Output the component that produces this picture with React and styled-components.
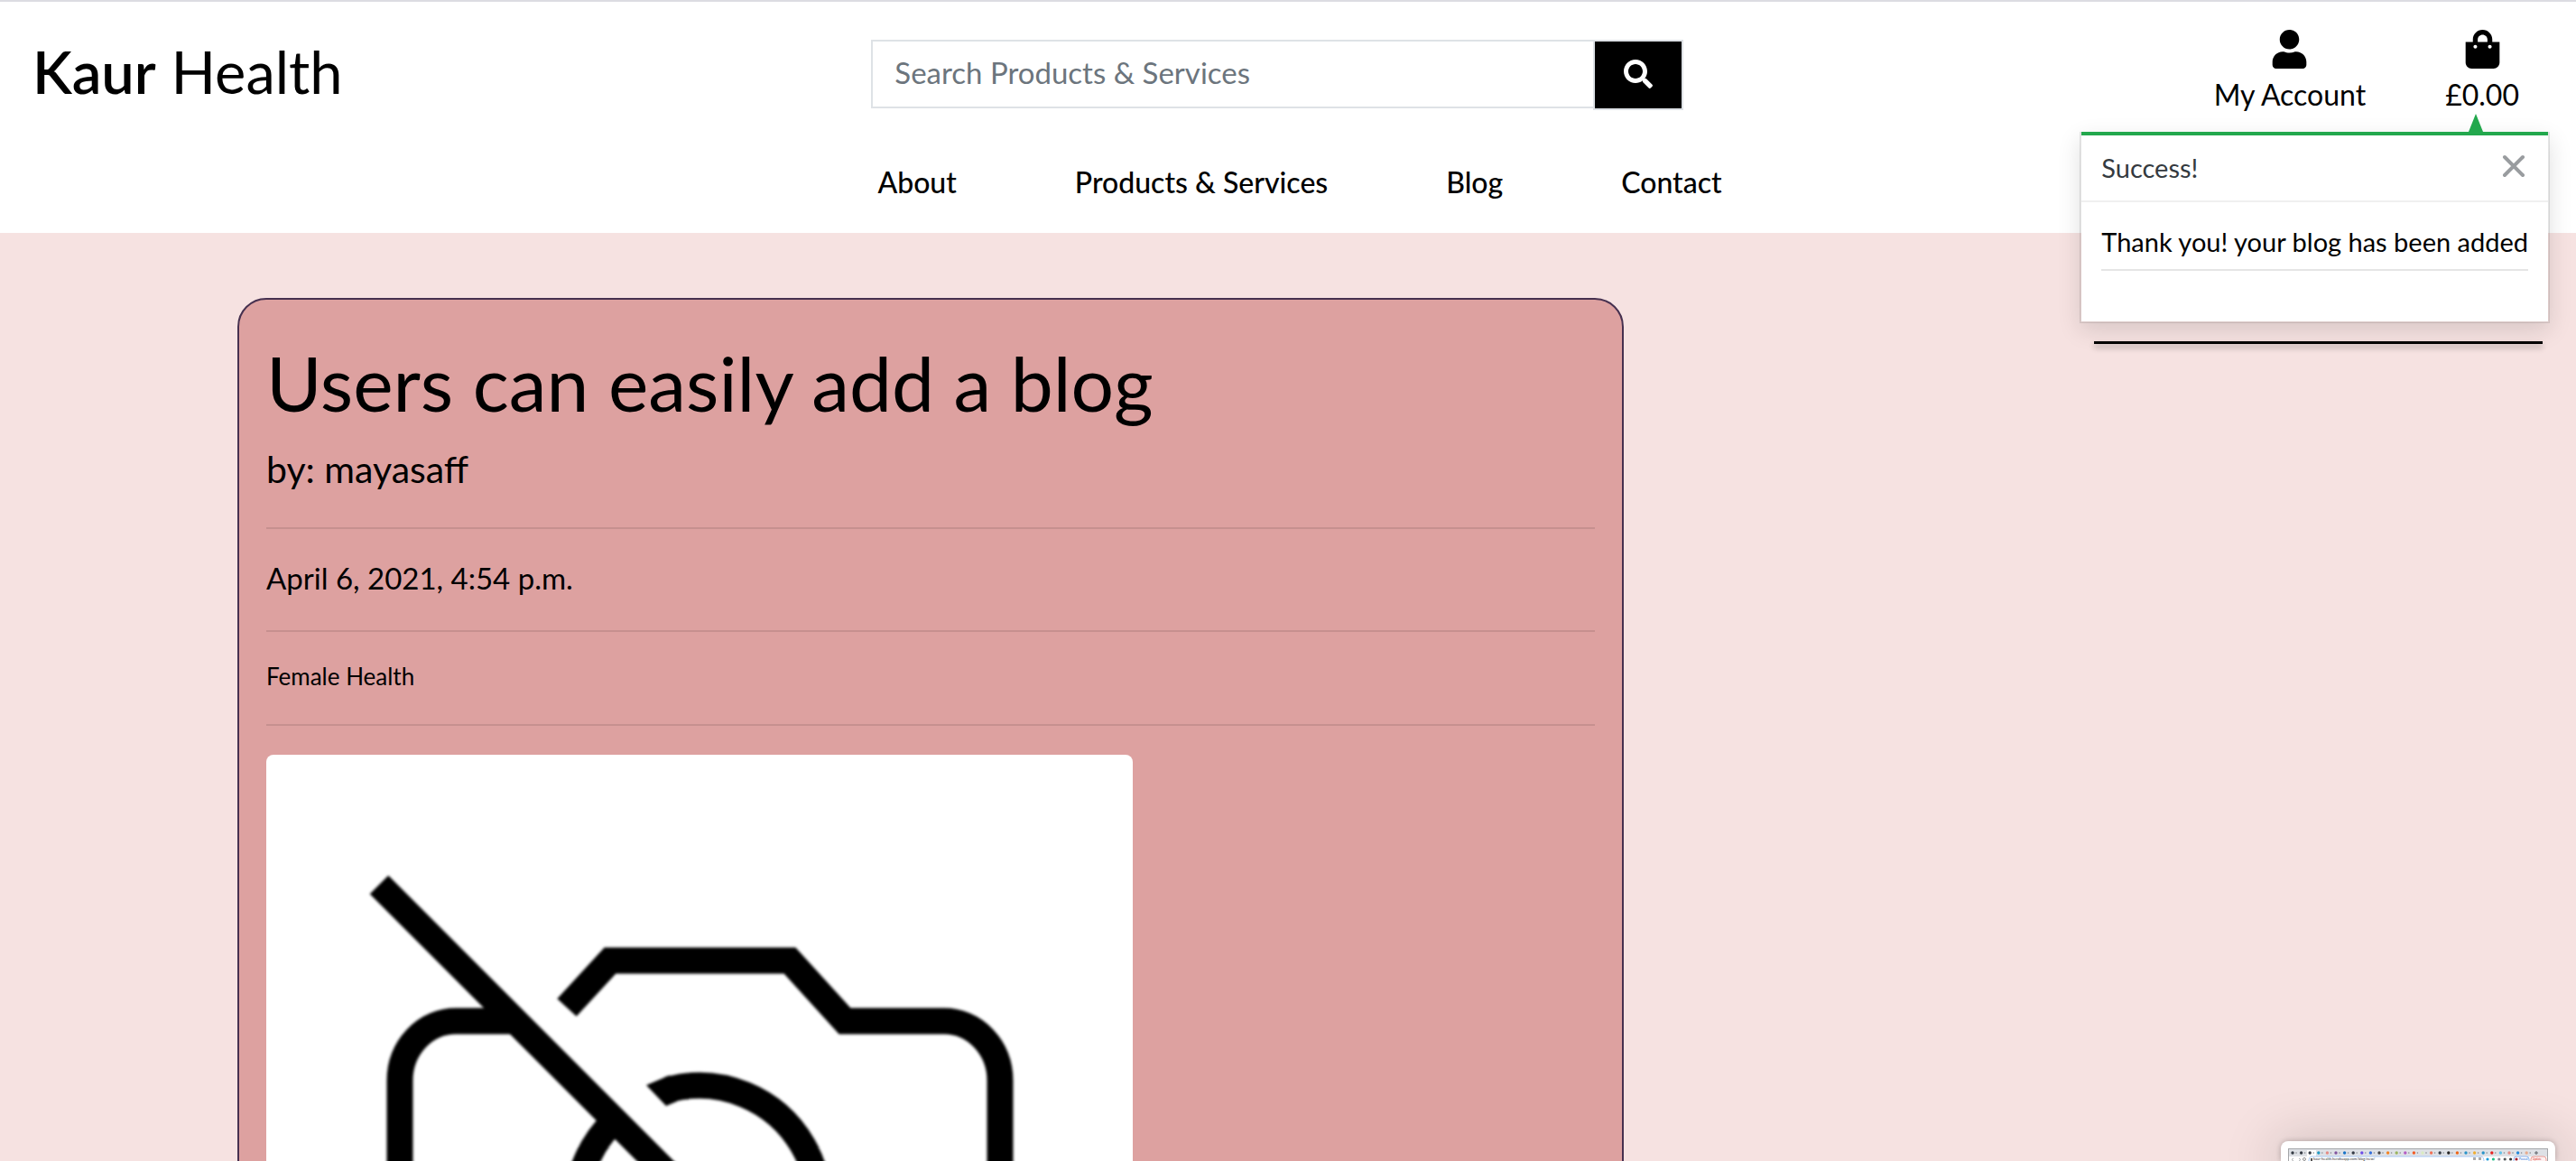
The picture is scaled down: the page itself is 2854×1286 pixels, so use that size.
import React, { useState } from 'react';
import styled, { createGlobalStyle } from 'styled-components';
import { FaUser, FaShoppingBag, FaSearch } from 'react-icons/fa';

const GlobalStyle = createGlobalStyle`
  *, *::before, *::after { box-sizing: border-box; }
  body {
    margin: 0;
    font-family: Lato, "Open Sans", sans-serif;
    font-size: 32px;
    color: #000;
    background: #f6e2e1;
  }
  h1, h2, p { margin: 0; font-weight: 400; }
  a { color: inherit; text-decoration: none; }
`;

const Page = styled.div`
  display: flex;
  flex-direction: column;
  height: 100vh;
  overflow: hidden;
`;

const Header = styled.header`
  position: relative;
  z-index: 2;
  flex: none;
  padding-bottom: 36px;
  border-top: 2px solid #dcdce2;
  background: #fff;
`;

const TopRow = styled.div`
  display: grid;
  grid-template-columns: repeat(3, 1fr);
  align-items: start;
`;

const Logo = styled.a`
  padding: 38px 0 0 36px;
  font-size: 65px;
  line-height: 78px;

  strong { font-weight: 600; }
`;

const SearchForm = styled.form`
  display: flex;
  align-items: flex-start;
  padding: 42px 38px 0 14px;
`;

const SearchInput = styled.input`
  flex: 1;
  min-width: 0;
  height: 76px;
  padding: 0 24px 4px;
  border: 2px solid #dee2e6;
  border-right: 0;
  border-radius: 0;
  outline: 0;
  background: #fff;
  color: #000;
  font: inherit;
  font-size: 33px;

  &::placeholder { color: #6c757d; opacity: 1; }
`;

const SearchButton = styled.button`
  display: flex;
  align-items: center;
  justify-content: center;
  width: 100px;
  height: 78px;
  padding: 0 0 2px;
  border: 2px solid #dee2e6;
  background: #000;
  color: #fff;
  font-size: 32px;
`;

const AccountLinks = styled.div`
  display: flex;
  justify-content: flex-end;
  gap: 88px;
  padding: 31px 63px 0 0;
`;

const AccountLink = styled.a`
  display: flex;
  flex-direction: column;
  align-items: center;
  gap: 9px;
  line-height: 40px;

  svg { width: 43px; height: 43px; }
`;

const Nav = styled.nav`
  display: flex;
  justify-content: center;
  gap: 131px;
  padding: 57px 0 0 26px;
  font-weight: 500;
  line-height: 40px;
`;

const ToastWrap = styled.div`
  position: absolute;
  top: 144px;
  right: 29px;
`;

const Toast = styled.section`
  position: relative;
  border: 2px solid rgba(0, 0, 0, 0.1);
  border-top: 0;
  background: #fff;
  background-clip: padding-box;
  box-shadow: 0 8px 24px rgba(0, 0, 0, 0.12);
  font-size: 29px;
  line-height: 36px;
`;

const ToastArrow = styled.span`
  position: absolute;
  right: 72px;
  bottom: 100%;
  border: 8px solid transparent;
  border-top: 0;
  border-bottom: 20px solid #23a84d;
`;

const ToastHeader = styled.header`
  display: flex;
  align-items: center;
  justify-content: space-between;
  height: 78px;
  padding: 0 24px 0 22px;
  border-top: 4px solid #23a84d;
  border-bottom: 2px solid #f0f0f0;
  color: #343a40;
`;

const CloseButton = styled.button`
  display: flex;
  padding: 0 0 4px;
  border: 0;
  background: none;
  color: #999c9f;
`;

const ToastBody = styled.div`
  padding: 24px 22px 56px;

  p {
    padding: 2px 0 12px;
    border-bottom: 2px solid #e5e5e5;
    white-space: nowrap;
  }
`;

const ToastShadowLine = styled.div`
  height: 3px;
  margin: 20px 8px 0 16px;
  background: #000;
  box-shadow: 0 4px 6px rgba(0, 0, 0, 0.3);
`;

const Main = styled.main`
  flex: 1;
  min-height: 0;
  overflow-y: auto;
  scrollbar-width: none;
  padding: 72px 263px;
`;

const Card = styled.article`
  width: 66%;
  padding: 42px 30px;
  border: 2px solid #46304f;
  border-radius: 32px;
  background: #dda1a0;
`;

const Title = styled.h1`
  font-size: 84px;
  line-height: 100px;
`;

const Author = styled.h2`
  padding: 22px 0 8px;
  font-size: 41px;
  line-height: 48px;
`;

const Rule = styled.hr`
  height: 2px;
  margin: 32px 0;
  border: 0;
  background: rgba(0, 0, 0, 0.1);
`;

const Published = styled.p`
  padding-bottom: 4px;
  font-size: 33px;
  line-height: 44px;
`;

const Category = styled.p`
  padding-bottom: 4px;
  font-size: 26px;
  line-height: 34px;
`;

const PostImage = styled.div`
  width: 960px;
  max-width: 100%;
  border-radius: 8px;
  overflow: hidden;
  background: #fff;

  svg { display: block; width: 100%; filter: blur(1.5px); }
`;

const Preview = styled.aside`
  position: fixed;
  right: 23px;
  bottom: 0;
  z-index: 3;
  width: 304px;
  height: 22px;
  border-radius: 8px 8px 0 0;
  background: #fff;
  box-shadow: 0 0 6px rgba(0, 0, 0, 0.25), 0 8px 60px 8px rgba(0, 0, 0, 0.2);

  svg { display: block; }
`;

const NoImage = () => (
  <svg viewBox="0 0 960 960" role="img" aria-label="No image available" fill="none" stroke="#000" strokeWidth="29">
    <path d="M125 144L790 809" />
    <path d="M333 280L381 228H580L641 295H751A62 66 0 0 1 813 361V735" />
    <path d="M280 295H210A62 66 0 0 0 148 361V700A62 66 0 0 0 210 766H720" />
    <path d="M445 371A133 133 0 0 1 574 593" />
    <path d="M421 366L443 389L455 384L447 355Z" fill="#000" stroke="none" />
    <path d="M386 405A133 133 0 1 0 574 593" />
  </svg>
);

const tabs = [
  '#333a44', '#333a44', '#333a44', '#1e9ac4', '#e58b84', '#80539f', '#1673c8', '#333a44', '#6b4be8',
  '#336fdc', '#444', '#f58220', '#9ab55e', '#b45ac4', '#f35a24', '#d9ecc0', '#f27055', '#333a44',
  '#222', '#ef6414', '#2793c9', '#efae32', '#2793c9', '#e8221f', '#62c3ea', '#e58b84', '#2388dc', '#e8ab8c',
];
const extensions = ['#1b9cd8', '#1fbd87', '#8a8796', '#55585c', '#333', '#a31d29'];

const BrowserPreview = () => (
  <svg width="304" height="22" viewBox="0 0 304 22" role="img" aria-label="Screen capture preview">
    <rect x="8" y="8" width="288" height="14" fill="#a3a5a8" />
    <rect x="9" y="9" width="286" height="13" fill="#dee1e6" />
    <rect x="9" y="17" width="286" height="5" fill="#fff" />
    <rect x="29" y="10" width="10" height="8" fill="#fff" />
    {tabs.map((color, i) => (
      <g key={i}>
        <circle cx={13 + i * 9.6} cy="13" r="1.7" fill={color} />
        <circle cx={17 + i * 9.6} cy="13" r="0.8" fill="#85898f" />
      </g>
    ))}
    <path d="M281 13h4M283 11v4" stroke="#5f6368" />
    <path d="M14 19l-2 1.5 2 1.5M20 19l2 1.5-2 1.5" stroke="#9a9da2" fill="none" strokeWidth="0.8" />
    <circle cx="26" cy="20" r="1.5" stroke="#777" fill="none" strokeWidth="0.8" />
    <path d="M31 22a3 5 0 0 1 3-5H222a3 5 0 0 1 3 5" fill="#fff" stroke="#a9c9f5" />
    <rect x="33" y="19" width="2" height="3" fill="#555" />
    <text x="36" y="21" fontSize="4" fill="#333">kaur-health.herokuapp.com/blog/new/</text>
    <path d="M213 18h3v3h-3zM219 18h3v3h-3z" fill="#aaa" />
    {extensions.map((color, i) => (
      <circle key={color} cx={229 + i * 6.4} cy="20" r="1.6" fill={color} />
    ))}
    <rect x="258" y="17" width="17" height="8" rx="3" fill="none" stroke="#8fb5f0" />
    <text x="264" y="21" fontSize="3" fill="#1967d2">Paused</text>
    <rect x="277" y="17" width="17" height="8" rx="3" fill="#fdf1f0" stroke="#ee9d96" />
    <text x="279" y="21" fontSize="3" fill="#d93025">Update</text>
  </svg>
);

const navItems = ['About', 'Products & Services', 'Blog', 'Contact'];

export default function App() {
  const [toastOpen, setToastOpen] = useState(true);

  return (
    <Page>
      <GlobalStyle />
      <Header>
        <TopRow>
          <Logo href="#home"><strong>Kaur</strong> Health</Logo>
          <SearchForm role="search" onSubmit={(e) => e.preventDefault()}>
            <SearchInput type="text" name="q" aria-label="Search Products & Services" placeholder="Search Products & Services" />
            <SearchButton type="submit" aria-label="Search"><FaSearch /></SearchButton>
          </SearchForm>
          <AccountLinks>
            <AccountLink href="#account"><FaUser />My Account</AccountLink>
            <AccountLink href="#bag"><FaShoppingBag />£0.00</AccountLink>
          </AccountLinks>
        </TopRow>
        <Nav>
          {navItems.map((item) => <a key={item} href="#nav">{item}</a>)}
        </Nav>
        {toastOpen && (
          <ToastWrap role="status">
            <Toast>
              <ToastArrow />
              <ToastHeader>
                <span>Success!</span>
                <CloseButton type="button" aria-label="Close" onClick={() => setToastOpen(false)}>
                  <svg width="28" height="28" viewBox="0 0 28 28" stroke="currentColor" strokeWidth="4" strokeLinecap="round">
                    <path d="M4 4L24 24M24 4L4 24" />
                  </svg>
                </CloseButton>
              </ToastHeader>
              <ToastBody>
                <p>Thank you! your blog has been added</p>
              </ToastBody>
            </Toast>
            <ToastShadowLine />
          </ToastWrap>
        )}
      </Header>
      <Main>
        <Card>
          <Title>Users can easily add a blog</Title>
          <Author>by: mayasaff</Author>
          <Rule />
          <Published>April 6, 2021, 4:54 p.m.</Published>
          <Rule />
          <Category>Female Health</Category>
          <Rule />
          <PostImage><NoImage /></PostImage>
        </Card>
      </Main>
      <Preview><BrowserPreview /></Preview>
    </Page>
  );
}
